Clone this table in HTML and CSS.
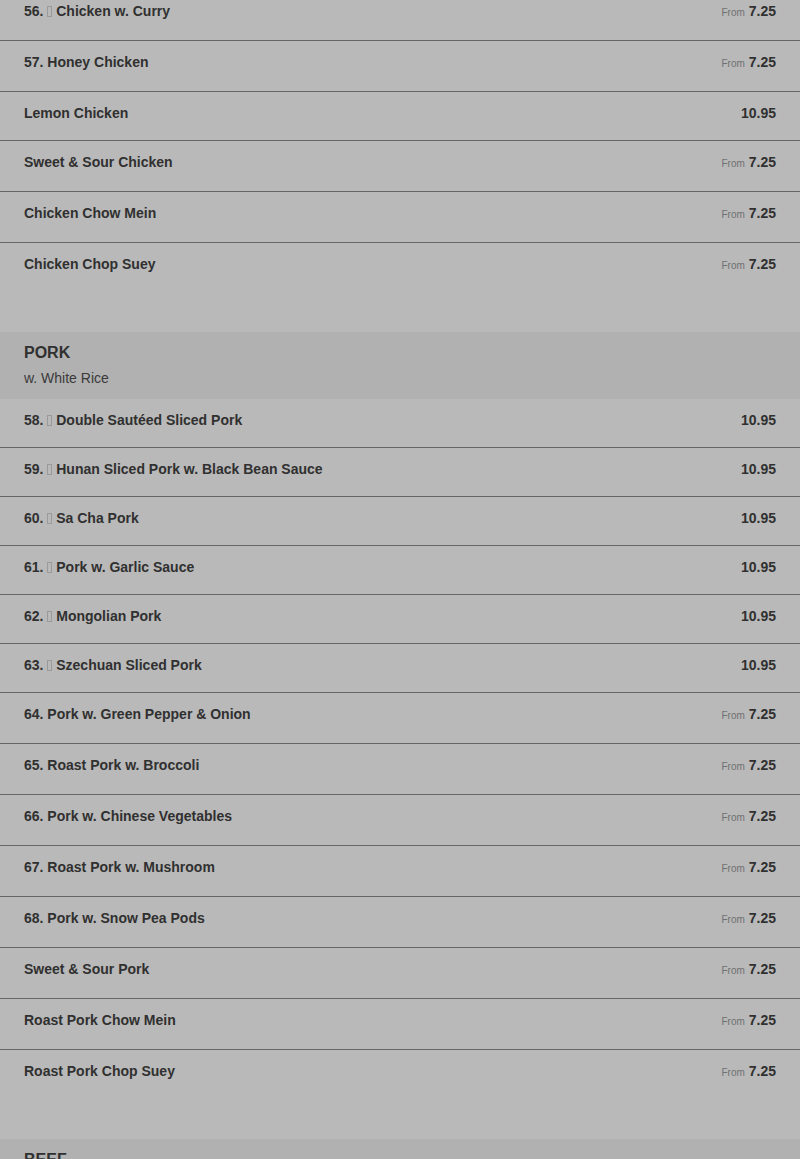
FILE: index.html
```html
<!DOCTYPE html>
<html>
<head>
    <title>Menu</title>
    <link rel="stylesheet" href="styles.css">
</head>
<body>
    <div class="menu">
        <div class="section">
            <div class="item from"><span class="name">56. <span class="spicy"></span> Chicken w. Curry</span><span class="price"><small>From</small> 7.25</span></div>
            <div class="item from"><span class="name">57. Honey Chicken</span><span class="price"><small>From</small> 7.25</span></div>
            <div class="item"><span class="name">Lemon Chicken</span><span class="price">10.95</span></div>
            <div class="item from"><span class="name">Sweet &amp; Sour Chicken</span><span class="price"><small>From</small> 7.25</span></div>
            <div class="item from"><span class="name">Chicken Chow Mein</span><span class="price"><small>From</small> 7.25</span></div>
            <div class="item from"><span class="name">Chicken Chop Suey</span><span class="price"><small>From</small> 7.25</span></div>
        </div>

        <div class="section">
            <div class="section-head">
                <h2>PORK</h2>
                <p>w. White Rice</p>
            </div>
            <div class="item"><span class="name">58. <span class="spicy"></span> Double Sautéed Sliced Pork</span><span class="price">10.95</span></div>
            <div class="item"><span class="name">59. <span class="spicy"></span> Hunan Sliced Pork w. Black Bean Sauce</span><span class="price">10.95</span></div>
            <div class="item"><span class="name">60. <span class="spicy"></span> Sa Cha Pork</span><span class="price">10.95</span></div>
            <div class="item"><span class="name">61. <span class="spicy"></span> Pork w. Garlic Sauce</span><span class="price">10.95</span></div>
            <div class="item"><span class="name">62. <span class="spicy"></span> Mongolian Pork</span><span class="price">10.95</span></div>
            <div class="item"><span class="name">63. <span class="spicy"></span> Szechuan Sliced Pork</span><span class="price">10.95</span></div>
            <div class="item from"><span class="name">64. Pork w. Green Pepper &amp; Onion</span><span class="price"><small>From</small> 7.25</span></div>
            <div class="item from"><span class="name">65. Roast Pork w. Broccoli</span><span class="price"><small>From</small> 7.25</span></div>
            <div class="item from"><span class="name">66. Pork w. Chinese Vegetables</span><span class="price"><small>From</small> 7.25</span></div>
            <div class="item from"><span class="name">67. Roast Pork w. Mushroom</span><span class="price"><small>From</small> 7.25</span></div>
            <div class="item from"><span class="name">68. Pork w. Snow Pea Pods</span><span class="price"><small>From</small> 7.25</span></div>
            <div class="item from"><span class="name">Sweet &amp; Sour Pork</span><span class="price"><small>From</small> 7.25</span></div>
            <div class="item from"><span class="name">Roast Pork Chow Mein</span><span class="price"><small>From</small> 7.25</span></div>
            <div class="item from"><span class="name">Roast Pork Chop Suey</span><span class="price"><small>From</small> 7.25</span></div>
        </div>

        <div class="section">
            <div class="section-head">
                <h2>BEEF</h2>
                <p>w. White Rice</p>
            </div>
        </div>
    </div>
</body>
</html>
```

FILE: styles.css
```css
body {
    margin: 0;
    background: #b9b9b9;
    font-family: "Liberation Sans", Arial, sans-serif;
    color: #303030;
    overflow: hidden;
}
.menu {
    margin-top: -10px;
}
.section {
    padding-bottom: 39px;
}
.section-head {
    background: #b1b1b1;
    padding: 11px 24px 11px;
}
.section-head h2 {
    margin: 0;
    font-size: 16px;
    line-height: 20px;
    font-weight: bold;
}
.section-head p {
    margin: 5px 0 0;
    font-size: 14px;
    line-height: 20px;
    color: #3a3a3a;
}
.item {
    display: flex;
    justify-content: space-between;
    align-items: flex-start;
    padding: 11px 24px 17px;
    border-bottom: 1px solid #666;
    font-size: 14px;
    line-height: 20px;
    font-weight: bold;
}
.item.from {
    padding-bottom: 19px;
}
.item:last-child {
    border-bottom: none;
}
.spicy {
    display: inline-block;
    width: 3px;
    height: 9px;
    border: 1px solid #9a9a9a;
    vertical-align: -1px;
}
.price small {
    font-size: 10px;
    line-height: 10px;
    font-weight: normal;
    color: #707070;
}
```
